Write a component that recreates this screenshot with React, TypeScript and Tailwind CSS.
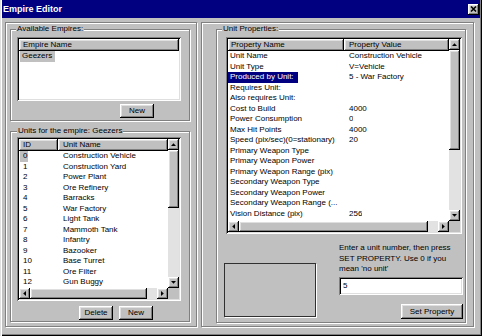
import React from "react";

const raised =
  "shadow-[inset_-1px_-1px_0_#000,inset_1px_1px_0_#fff,inset_-2px_-2px_0_#808080,inset_2px_2px_0_#dfdfdf]";
const sunken =
  "shadow-[inset_1px_1px_0_#808080,inset_-1px_-1px_0_#fff,inset_2px_2px_0_#000,inset_-2px_-2px_0_#dfdfdf]";
const etched = "border border-[#808080] shadow-[inset_1px_1px_0_#fff,1px_1px_0_#fff]";

function Tri({ dir }: { dir: "up" | "down" | "left" | "right" }) {
  if (dir === "up" || dir === "down") {
    const pts = dir === "up" ? "0,3 5,3 2.5,0.2" : "0,0 5,0 2.5,2.8";
    return (
      <svg width="5" height="3" viewBox="0 0 5 3">
        <polygon points={pts} fill="#000" />
      </svg>
    );
  }
  const pts = dir === "left" ? "3,0 3,5 0.2,2.5" : "0,0 0,5 2.8,2.5";
  return (
    <svg width="3" height="5" viewBox="0 0 3 5">
      <polygon points={pts} fill="#000" />
    </svg>
  );
}

function SBtn({ dir }: { dir: "up" | "down" | "left" | "right" }) {
  return (
    <div className={`w-[11px] h-[11px] shrink-0 bg-[#c0c0c0] ${raised} flex items-center justify-center`}>
      <Tri dir={dir} />
    </div>
  );
}

function VScroll({ thumb }: { thumb: number }) {
  return (
    <div className="w-[11px] shrink-0 flex flex-col">
      <SBtn dir="up" />
      <div className={`shrink-0 bg-[#c0c0c0] ${raised}`} style={{ height: thumb }} />
      <div className="flex-1 bg-[#e2e2e2]" />
      <SBtn dir="down" />
    </div>
  );
}

function HScroll({ thumb }: { thumb: number }) {
  return (
    <div className="flex-1 h-[11px] flex">
      <SBtn dir="left" />
      <div className={`shrink-0 bg-[#c0c0c0] ${raised}`} style={{ width: thumb }} />
      <div className="flex-1 bg-[#e2e2e2]" />
      <SBtn dir="right" />
    </div>
  );
}

function Hdr({ children, cls }: { children?: React.ReactNode; cls: string }) {
  return (
    <div className={`h-[12px] leading-[12px] bg-[#c0c0c0] ${raised} whitespace-nowrap overflow-hidden ${cls}`}>
      {children}
    </div>
  );
}

function Btn({ children, cls }: { children: React.ReactNode; cls: string }) {
  return (
    <div className={`bg-[#c0c0c0] ${raised} flex items-center justify-center leading-none ${cls}`}>
      {children}
    </div>
  );
}

const units = [
  "Construction Vehicle",
  "Construction Yard",
  "Power Plant",
  "Ore Refinery",
  "Barracks",
  "War Factory",
  "Light Tank",
  "Mammoth Tank",
  "Infantry",
  "Bazooker",
  "Base Turret",
  "Ore Filter",
  "Gun Buggy",
];

const props: [string, string][] = [
  ["Unit Name", "Construction Vehicle"],
  ["Unit Type", "V=Vehicle"],
  ["Produced by Unit:", "5 - War Factory"],
  ["Requires Unit:", ""],
  ["Also requires Unit:", ""],
  ["Cost to Build", "4000"],
  ["Power Consumption", "0"],
  ["Max Hit Points", "4000"],
  ["Speed (pix/sec)(0=stationary)", "20"],
  ["Primary Weapon Type", ""],
  ["Primary Weapon Power", ""],
  ["Primary Weapon Range (pix)", ""],
  ["Secondary Weapon Type", ""],
  ["Secondary Weapon Power", ""],
  ["Secondary Weapon Range (...", ""],
  ["Vision Distance (pix)", "256"],
  ["Upgrades to Unit", "0 - Construction Vehicle"],
];

export default function App() {
  return (
    <div
      className={`w-[482px] h-[336px] bg-[#c0c0c0] px-[2px] pb-[2px] flex flex-col text-black text-[8px] font-['Liberation_Sans',Arial,sans-serif] shadow-[inset_1px_0_0_#dfdfdf,inset_2px_0_0_#fff,inset_-1px_-1px_0_#000,inset_-2px_-2px_0_#808080]`}
    >
      {/* title bar */}
      <div className="h-[18px] shrink-0 bg-[#000080] flex items-center justify-between pl-[1px] pr-[1px]">
        <span className="text-white font-bold text-[9px] leading-none">Empire Editor</span>
        <div className={`w-[11px] h-[11px] bg-[#c0c0c0] ${raised} flex items-center justify-center`}>
          <svg width="7" height="6" viewBox="0 0 7 6">
            <path d="M1 0.5 L6 5.5 M6 0.5 L1 5.5" stroke="#000" strokeWidth="1.5" />
          </svg>
        </div>
      </div>

      {/* body */}
      <div className="flex items-start pt-[4px] pl-[3px]">
        {/* left pane */}
        <div className={`w-[192px] h-[305px] ${etched} flex flex-col pl-[4px] pt-[6px]`}>
          {/* Available empires */}
          <div className={`relative w-[180px] h-[92px] ${etched} pl-[6px] pt-[7px] flex flex-col`}>
            <span className="absolute left-[5px] top-[-6px] px-[1px] bg-[#c0c0c0] leading-[10px]">Available Empires:</span>
            <div className={`w-[164px] h-[64px] p-[2px] bg-white ${sunken} flex flex-col`}>
              <Hdr cls="pl-[4px]">Empire Name</Hdr>
              <div className="h-[10.5px] leading-[10.5px] pl-[1px]">
                <span className="inline-block h-full bg-[#c0c0c0] pl-[2px] pr-[3px]">Geezers</span>
              </div>
            </div>
            <Btn cls="mt-[3px] ml-[103px] w-[34px] h-[14px]">New</Btn>
          </div>

          {/* Units */}
          <div className={`relative mt-[10px] w-[180px] h-[191px] ${etched} pl-[6px] pt-[5px] flex flex-col`}>
            <span className="absolute left-[6px] top-[-6px] px-[1px] bg-[#c0c0c0] leading-[10px]">
              Units for the empire: Geezers
            </span>
            <div className={`w-[164px] h-[164px] p-[2px] bg-white ${sunken} flex flex-col`}>
              <div className="flex flex-1 min-h-0">
                <div className="flex-1 flex flex-col overflow-hidden">
                  <div className="flex shrink-0">
                    <Hdr cls="w-[39px] shrink-0 pl-[4px]">ID</Hdr>
                    <Hdr cls="flex-1 pl-[5px]">Unit Name</Hdr>
                  </div>
                  {units.map((u, i) => (
                    <div key={i} className="flex h-[10.5px] leading-[10.5px] shrink-0 whitespace-nowrap">
                      <div className="w-[39px] shrink-0 pl-[1px]">
                        <span className={`inline-block h-full pl-[3px] pr-[1px] ${i === 0 ? "bg-[#c0c0c0]" : ""}`}>{i}</span>
                      </div>
                      <div className="pl-[5px]">{u}</div>
                    </div>
                  ))}
                </div>
                <VScroll thumb={58} />
              </div>
              <div className="flex h-[11px] shrink-0">
                <HScroll thumb={117} />
                <div className="w-[11px] bg-[#c0c0c0]" />
              </div>
            </div>
            <div className="flex gap-[6px] mt-[5px] ml-[62px]">
              <Btn cls="w-[34px] h-[14px]">Delete</Btn>
              <Btn cls="w-[34px] h-[14px]">New</Btn>
            </div>
          </div>
        </div>

        {/* right pane */}
        <div className={`ml-[4px] w-[273px] h-[305px] ${etched} pl-[14px] pt-[6px]`}>
          <div className={`relative w-[250px] h-[294px] ${etched} pl-[7px] pt-[7px] flex flex-col`}>
            <span className="absolute left-[5px] top-[-6px] px-[1px] bg-[#c0c0c0] leading-[10px]">Unit Properties:</span>
            <div className={`ml-[2px] w-[236px] h-[197px] p-[2px] bg-white ${sunken} flex flex-col`}>
              <div className="flex flex-1 min-h-0">
                <div className="flex-1 flex flex-col overflow-hidden">
                  <div className="flex shrink-0">
                    <Hdr cls="w-[116px] shrink-0 pl-[3px]">Property Name</Hdr>
                    <Hdr cls="flex-1 pl-[5px]">Property Value</Hdr>
                  </div>
                  {props.map(([n, v], i) => (
                    <div key={i} className="flex h-[10.5px] leading-[10.5px] shrink-0 whitespace-nowrap">
                      <div className="w-[116px] shrink-0 overflow-hidden">
                        <span className={`inline-block h-full pl-[2px] pr-[4px] ${i === 2 ? "bg-[#000080] text-white" : ""}`}>{n}</span>
                      </div>
                      <div className="pl-[5px] overflow-hidden">{v}</div>
                    </div>
                  ))}
                </div>
                <VScroll thumb={100} />
              </div>
              <div className="flex h-[11px] shrink-0">
                <HScroll thumb={189} />
                <div className="w-[11px] bg-[#c0c0c0]" />
              </div>
            </div>

            <div className="flex items-start">
              <div className="mt-[29px] w-[92px] h-[54px] border border-[#303030] shadow-[1px_1px_0_#fff]" />
              <div className="ml-[23px] mt-[9px] w-[124px] flex flex-col">
                <div className="leading-[10.5px] whitespace-nowrap">
                  Enter a unit number, then press
                  <br />
                  SET PROPERTY. Use 0 if you
                  <br />
                  mean 'no unit'
                </div>
                <div className={`mt-[2.5px] h-[18px] w-[124px] bg-white ${sunken} pl-[4px] flex items-center`}>5</div>
                <Btn cls="mt-[9px] self-end w-[62px] h-[15px]">Set Property</Btn>
              </div>
            </div>
          </div>
        </div>
      </div>
    </div>
  );
}
